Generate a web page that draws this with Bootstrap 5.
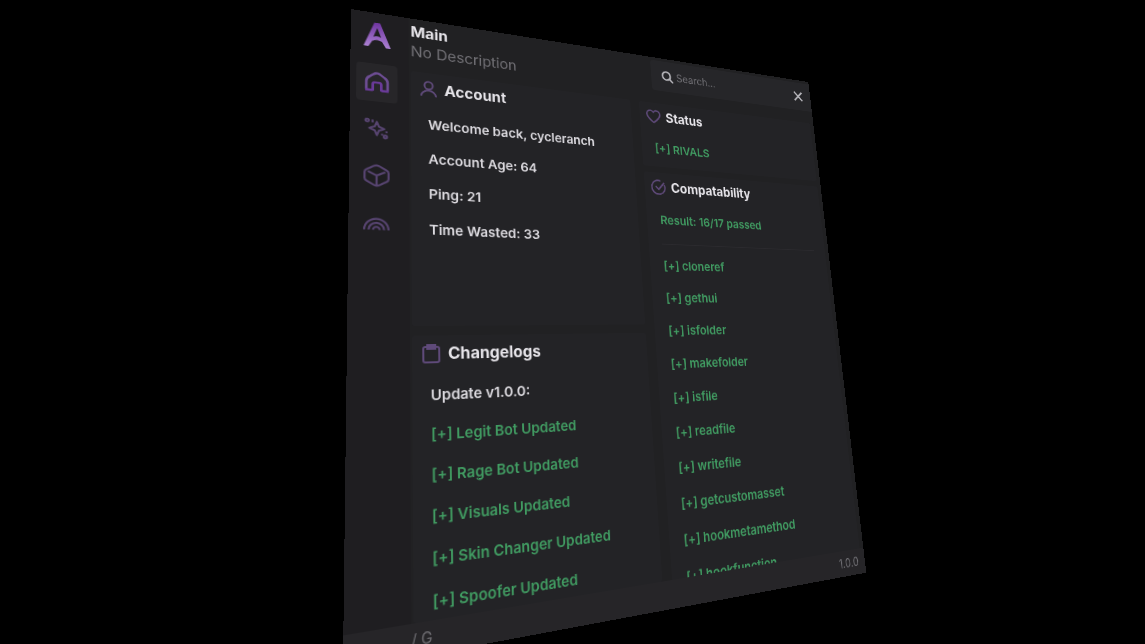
<!DOCTYPE html>
<html lang="en" data-bs-theme="dark">
<head>
<meta charset="utf-8">
<meta name="viewport" content="width=device-width, initial-scale=1">
<title>Main</title>
<link href="https://cdn.jsdelivr.net/npm/bootstrap@5.3.0/dist/css/bootstrap.min.css" rel="stylesheet">
<style>
  body { background: #000; font-family: Inter, "Open Sans", sans-serif; font-size: 15px; line-height: 24px; color: #dcdadf; }
  /* The window is laid out flat, then tilted in space as one plane */
  .tilted-window {
    width: 608px; height: 668px;
    background: #212123;
    transform-origin: 0 0;
    transform: matrix3d(1.03276, .1628, 0, .0005202, -.02994, .82857, 0, -.00024126, 0, 0, 1, 0, 82, 9, 0, 1);
  }
  .window-body, .window-main, .panes, .pane-column, .search-box input { min-width: 0; min-height: 0; }
  .rail { width: 60px; padding: 7px 0 0 6px; background: #1f1e21; }
  .rail-logo { width: 42px; height: 40px; margin-bottom: 14px; }
  .rail-item { width: 42px; height: 44px; margin-bottom: 9px; border-radius: 4px; color: #574470; }
  .rail-item.active { background: #272629; color: #6a3a99; }
  .rail-item svg { width: 26px; height: 28px; }
  .top-bar { height: 60px; padding-left: 2px; }
  .page-name { font-size: 17px; line-height: 24px; font-weight: 700; color: #e6e4e9; }
  .page-note { font-size: 17px; line-height: 24px; color: #727176; }
  .search-box { width: 250px; height: 42px; background: #262629; border-radius: 4px 0 0 4px; padding: 0 12px 0 14px; margin-top: 4px; }
  .search-box input { font-size: 14px; color: #77767b; outline: 0; }
  .search-box input::placeholder { color: #727176; opacity: 1; }
  .close-btn { color: #b5b4b9; line-height: 0; }
  .panes { gap: 12px; padding: 4px 6px 0 2px; }
  .pane-column { flex: 1 1 0; }
  .pane-column.left { gap: 10px; }
  .pane { background: #232326; border-radius: 2px; padding: 0 18px; overflow: hidden; }
  .account { height: 286px; }
  .right .pane + .pane { margin-top: 8px; }
  .pane-title { font-size: 17px; line-height: 24px; font-weight: 700; gap: 7px; margin: 0 0 13px -9px; padding: 7px 0 0; color: #e6e4e9; }
  .pane-title svg { width: 20px; height: 20px; color: #5f4a7a; }
  .pane-title + * { padding-top: 6px; }
  .pane ul, .result-line { font-weight: 600; }
  .pane ul { display: grid; gap: 16px; }
  .good { color: #419c62; }
  .version { color: #dcdadf; }
  .status-list { padding-bottom: 12px; }
  .result-line { border-bottom: 1px solid #2b2a2e; padding-bottom: 18px; margin-bottom: 15px; }
  .foot { height: 30px; background: #262528; font-size: 14px; line-height: 20px; color: #727176; padding: 0 10px 0 60px; }
</style>
</head>
<body class="overflow-hidden">
<main class="d-flex justify-content-center vh-100">
  <div class="tilted-window d-flex flex-column flex-shrink-0">
    <div class="window-body d-flex flex-grow-1">
      <nav class="rail flex-shrink-0" aria-label="Sections">
        <svg class="rail-logo d-block" viewBox="0 0 42 40" aria-hidden="true">
          <defs><linearGradient id="lg" x1="0" y1="0" x2="0" y2="1"><stop offset="0" stop-color="#6f35a0"/><stop offset="1" stop-color="#ab80d2"/></linearGradient></defs>
          <path d="M7 34L18 5h6l11 29h-5l-4-7q-5-3-10 0l-4 7zM17 22q4-2 8 0L21 11z" fill="url(#lg)" fill-rule="evenodd"/>
        </svg>
        <a href="#" class="rail-item active d-flex align-items-center justify-content-center" aria-label="Home">
          <svg viewBox="0 0 24 24" fill="none" stroke="currentColor" stroke-width="2.500" stroke-linejoin="round"><path d="M2 20V11Q2 8 5 6L9 3q3-2 6 0l4 3q3 2 3 5v9" stroke="#6d4d93"/><path d="M8 21v-7q0-2 2-2h4q2 0 2 2v7M1 20.500h7M16 20.500h7"/></svg></a>
        <a href="#" class="rail-item d-flex align-items-center justify-content-center" aria-label="Features">
          <svg viewBox="0 0 24 24" fill="none" stroke="currentColor" stroke-width="2" stroke-linejoin="round"><path d="M12 5l2 5 5 2-5 2-2 5-2-5-5-2 5-2z"/><circle cx="3" cy="4" r="1.500"/><circle cx="20" cy="20" r="1.500"/><path d="M8 3v3M17 17v2M21 14v2"/></svg></a>
        <a href="#" class="rail-item d-flex align-items-center justify-content-center" aria-label="Items">
          <svg viewBox="0 0 24 24" fill="none" stroke="currentColor" stroke-width="2" stroke-linejoin="round"><path d="M10 2q2-1 4 0l7 4q2 1 2 3v6q0 2-2 3l-7 4q-2 1-4 0l-7-4q-2-1-2-3V9q0-2 2-3zM4 8l8 4 8-4M12 12v10"/></svg></a>
        <a href="#" class="rail-item d-flex align-items-center justify-content-center" aria-label="Visuals">
          <svg viewBox="0 0 24 24" fill="none" stroke="currentColor" stroke-width="2"><path d="M1 18a11 11 0 0 1 22 0M5 18a7 7 0 0 1 14 0M9 18a3 3 0 0 1 6 0"/></svg></a>
      </nav>

      <div class="window-main d-flex flex-column flex-grow-1">
        <header class="top-bar d-flex justify-content-between align-items-start flex-shrink-0">
          <div class="pt-1">
            <h1 class="page-name mb-0">Main</h1>
            <p class="page-note mb-0">No Description</p>
          </div>
          <div class="search-box d-flex align-items-center">
            <svg width="18" height="18" viewBox="0 0 16 16" fill="none" stroke="#b5b4b9" stroke-width="2" class="flex-shrink-0" aria-hidden="true"><circle cx="7" cy="7" r="5"/><path d="M11 11l4 4"/></svg>
            <input class="border-0 bg-transparent p-0 ms-1 flex-grow-1" type="search" placeholder="Search..." aria-label="Search">
            <button type="button" class="close-btn border-0 bg-transparent p-0" aria-label="Close">
              <svg width="18" height="18" viewBox="0 0 14 14" stroke="currentColor" stroke-width="2"><path d="M2 2l10 10M12 2L2 12"/></svg>
            </button>
          </div>
        </header>

        <div class="panes d-flex flex-grow-1">
          <div class="pane-column left d-flex flex-column">
            <section class="pane account flex-shrink-0">
              <h2 class="pane-title d-flex align-items-center"><svg viewBox="0 0 20 20" fill="none" stroke="currentColor" stroke-width="2"><circle cx="10" cy="6" r="4.500"/><path d="M2 19c0-4 4-7 8-7s8 3 8 7"/></svg>Account</h2>
              <ul class="list-unstyled mb-0"><li>Welcome back, cycleranch</li><li>Account Age: 64</li><li>Ping: 21</li><li>Time Wasted: 33</li></ul>
            </section>
            <section class="pane flex-grow-1">
              <h2 class="pane-title d-flex align-items-center"><svg viewBox="0 0 20 20" fill="none" stroke="currentColor" stroke-width="2"><rect x="2" y="3" width="16" height="16" rx="2"/><path d="M6 1h8v4H6z"/></svg>Changelogs</h2>
              <ul class="list-unstyled mb-0 good"><li class="version">Update v1.0.0:</li><li>[+] Legit Bot Updated</li><li>[+] Rage Bot Updated</li><li>[+] Visuals Updated</li><li>[+] Skin Changer Updated</li><li>[+] Spoofer Updated</li></ul>
            </section>
          </div>
          <div class="pane-column right overflow-hidden">
            <section class="pane">
              <h2 class="pane-title d-flex align-items-center"><svg viewBox="0 0 20 20" fill="none" stroke="currentColor" stroke-width="2"><path d="M10 18C5 14 1 11 1 7c0-5 6-7 9-3 3-4 9-2 9 3 0 4-4 7-9 11z"/></svg>Status</h2>
              <ul class="status-list list-unstyled mb-0 good"><li>[+] RIVALS</li></ul>
            </section>
            <section class="pane">
              <h2 class="pane-title d-flex align-items-center"><svg viewBox="0 0 20 20" fill="none" stroke="currentColor" stroke-width="2"><path d="M18 7a9 9 0 1 1-5-5"/><path d="M6 9l4 4 8-9"/></svg>Compatability</h2>
              <p class="good result-line">Result: 16/17 passed</p>
              <ul class="list-unstyled mb-0 good"><li>[+] cloneref</li><li>[+] gethui</li><li>[+] isfolder</li><li>[+] makefolder</li><li>[+] isfile</li><li>[+] readfile</li><li>[+] writefile</li><li>[+] getcustomasset</li><li>[+] hookmetamethod</li><li>[+] hookfunction</li></ul>
            </section>
          </div>
        </div>
      </div>
    </div>
    <footer class="foot d-flex align-items-center justify-content-between flex-shrink-0"><span>/ G</span><span>1.0.0</span></footer>
  </div>
</main>
<script src="https://cdn.jsdelivr.net/npm/bootstrap@5.3.0/dist/js/bootstrap.bundle.min.js"></script>
</body>
</html>
